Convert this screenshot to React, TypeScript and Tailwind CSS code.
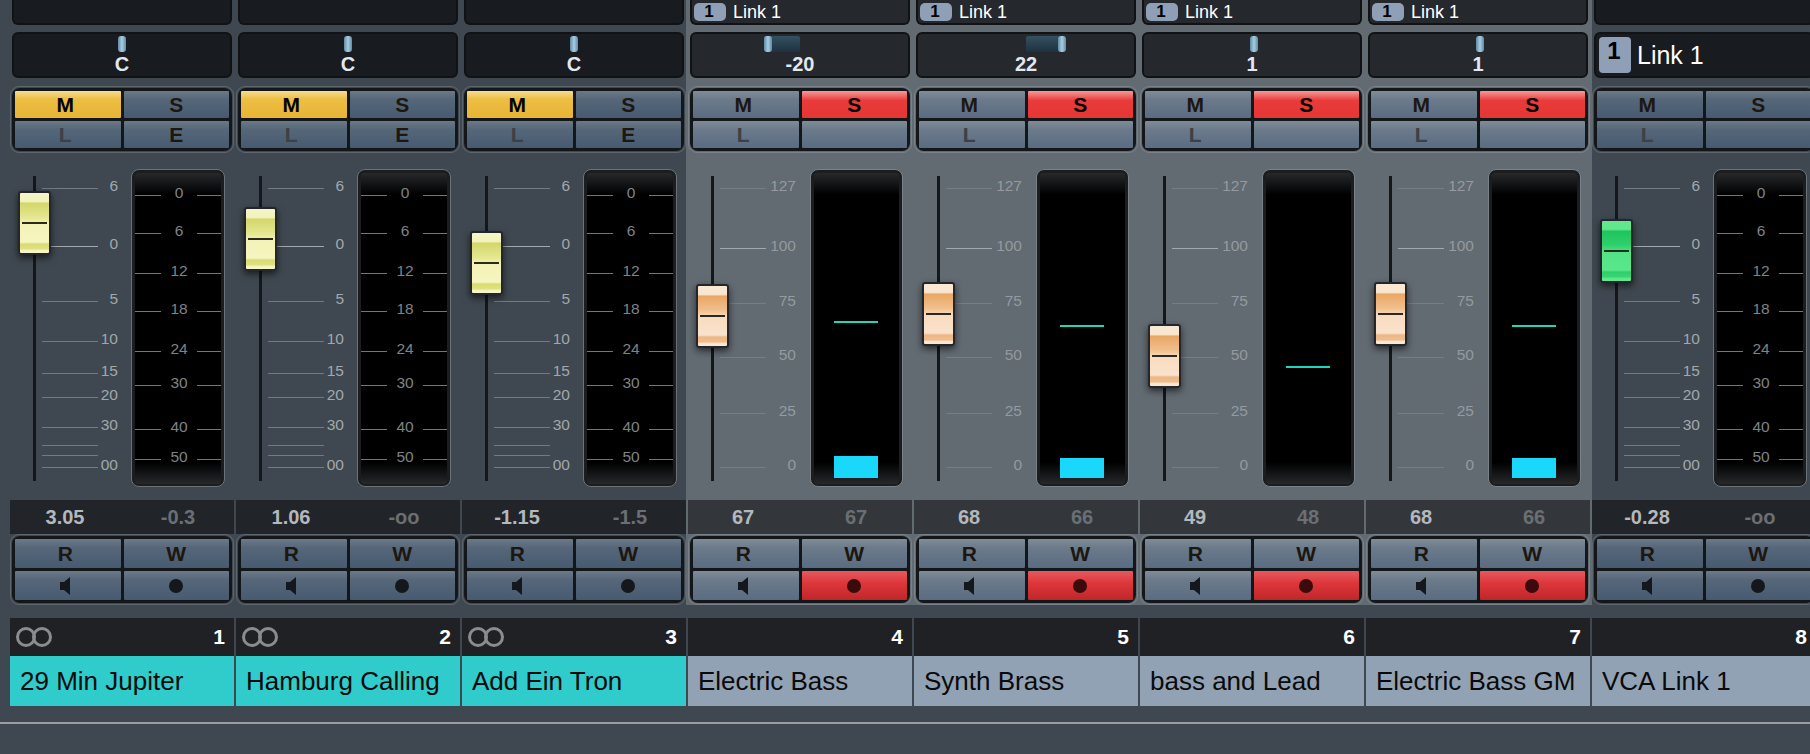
import React from "react";

type Tick = { y: number; label?: string };

interface ChannelData {
  top?: boolean;
  bigLink?: boolean;
  pan: string;
  panFrom: number;
  panTo: number;
  thumb: number;
  midi: boolean;
  capTop: number;
  cap: "yellow" | "orange" | "green";
  level?: number;
  barTop?: number;
  left: string;
  right: string;
  num: number;
  name: string;
  stereo?: boolean;
}

const channels: ChannelData[] = [
  { pan: "C", panFrom: 0, panTo: 0, thumb: 112, midi: false, capTop: 191, cap: "yellow", left: "3.05", right: "-0.3", num: 1, name: "29 Min Jupiter", stereo: true },
  { pan: "C", panFrom: 0, panTo: 0, thumb: 112, midi: false, capTop: 207, cap: "yellow", left: "1.06", right: "-oo", num: 2, name: "Hamburg Calling", stereo: true },
  { pan: "C", panFrom: 0, panTo: 0, thumb: 112, midi: false, capTop: 231, cap: "yellow", left: "-1.15", right: "-1.5", num: 3, name: "Add Ein Tron", stereo: true },
  { top: true, pan: "-20", panFrom: 76, panTo: 112, thumb: 80, midi: true, capTop: 284, cap: "orange", level: 321, barTop: 458, left: "67", right: "67", num: 4, name: "Electric Bass" },
  { top: true, pan: "22", panFrom: 112, panTo: 148, thumb: 148, midi: true, capTop: 282, cap: "orange", level: 325, barTop: 460, left: "68", right: "66", num: 5, name: "Synth Brass" },
  { top: true, pan: "1", panFrom: 0, panTo: 0, thumb: 114, midi: true, capTop: 324, cap: "orange", level: 366, left: "49", right: "48", num: 6, name: "bass and Lead" },
  { top: true, pan: "1", panFrom: 0, panTo: 0, thumb: 114, midi: true, capTop: 282, cap: "orange", level: 325, barTop: 460, left: "68", right: "66", num: 7, name: "Electric Bass GM" },
  { bigLink: true, pan: "", panFrom: 0, panTo: 0, thumb: 0, midi: false, capTop: 219, cap: "green", left: "-0.28", right: "-oo", num: 8, name: "VCA Link 1" },
];

const dbTicks: Tick[] = [
  { y: 188, label: "6" },
  { y: 246, label: "0" },
  { y: 301, label: "5" },
  { y: 341, label: "10" },
  { y: 373, label: "15" },
  { y: 397, label: "20" },
  { y: 427, label: "30" },
  { y: 445 },
  { y: 455 },
  { y: 467, label: "00" },
];

const midiTicks: Tick[] = [
  { y: 188, label: "127" },
  { y: 248, label: "100" },
  { y: 303, label: "75" },
  { y: 357, label: "50" },
  { y: 413, label: "25" },
  { y: 467, label: "0" },
];

const meterTicks: Tick[] = [
  { y: 195, label: "0" },
  { y: 233, label: "6" },
  { y: 273, label: "12" },
  { y: 311, label: "18" },
  { y: 351, label: "24" },
  { y: 385, label: "30" },
  { y: 429, label: "40" },
  { y: 459, label: "50" },
];

const capStyles = {
  yellow:
    "bg-[linear-gradient(180deg,#f5f5c8_0%,#f2f2bc_14%,#d3d76c_17%,#e4e68e_40%,#f3f3b8_52%,#f5f5c0_82%,#d9dc72_85%,#dfe27e_93%,#f5f5c8_96%)]",
  orange:
    "bg-[linear-gradient(180deg,#fbe8d2_0%,#f9e6d0_14%,#e9a765_17%,#f0bf8c_40%,#f8dcc0_52%,#f9e2cc_82%,#eeb684_85%,#f0bc8c_93%,#fbe8d4_96%)]",
  green:
    "bg-[linear-gradient(180deg,#63e88f_0%,#60e68c_14%,#1fc45e_17%,#2ed06c_40%,#52e385_52%,#5ae78c_82%,#2fcf6b_85%,#38d574_93%,#63e88f_96%)]",
};

const btnBase = "flex items-center justify-center font-['Liberation_Sans',sans-serif] font-bold text-[21px] text-[#1c1710] rounded-[1px]";
const btnDark = "bg-[linear-gradient(180deg,#6c7a88_0%,#566779_30%,#475a70_100%)]";
const btnLight = "bg-[linear-gradient(180deg,#808c98_0%,#6c7b8b_30%,#5a6c82_100%)]";
const btnYellow = "bg-[linear-gradient(180deg,#f6dd92_0%,#ecbe42_30%,#e8b535_100%)] text-black";
const btnRed = "bg-[linear-gradient(180deg,#f49a9a_0%,#ea3b3b_35%,#e53535_100%)] text-black";
const btnRec = "bg-[linear-gradient(180deg,#e65a5e_0%,#de383c_40%,#bf2628_100%)]";

function Speaker() {
  return (
    <svg width="10" height="18" viewBox="0 0 10 18">
      <path d="M0 5h4L10 0v18L4 13H0z" fill="#14171b" />
    </svg>
  );
}

function Rings() {
  return (
    <svg width="36" height="20" viewBox="0 0 36 20" fill="none" stroke="#8a8c8e" strokeWidth="3">
      <circle cx="10" cy="10" r="8.5" />
      <circle cx="26" cy="10" r="8.5" />
    </svg>
  );
}

function Badge() {
  return (
    <span className="flex h-[18px] w-[32px] items-center justify-center rounded-[5px] bg-[#8f9fb5] pr-[2px] font-['Liberation_Sans',sans-serif] text-[17px] font-bold text-black">
      1
    </span>
  );
}

function Channel({ data }: { data: ChannelData }) {
  const hi = data.midi;
  const boxBg = hi ? "bg-[#25292e]" : "bg-[#181b1f]";
  const btn = hi ? btnLight : btnDark;
  const ticks = hi ? midiTicks : dbTicks;
  const ring = hi ? "border-[#7a8289]" : "border-[#5f676e]";

  return (
    <div className="w-[226px] shrink-0">
      <div className={hi ? "bg-[#626a72] pl-[2px]" : data.bigLink ? "border-l-2 border-[#626a72]" : "bg-[#3f4850] pl-[2px]"}>
        <div className={`ml-[2px] flex h-[25px] w-[220px] items-center gap-[7px] rounded-b-[6px] border-2 border-t-0 border-[#101214] pl-[2px] ${boxBg}`}>
          {data.top && (
            <>
              <Badge />
              <span className="font-['Liberation_Sans',sans-serif] text-[18px] leading-none text-white">Link 1</span>
            </>
          )}
        </div>

        <div className={`relative mt-[7px] ml-[2px] h-[46px] w-[220px] rounded-[6px] border-2 border-[#101214] ${boxBg}`}>
          {data.bigLink ? (
            <div className="flex h-full items-center gap-[6px] pl-[3px]">
              <span className="flex h-[36px] w-[32px] items-start justify-center rounded-[4px] bg-[#8f9fb5] pt-[2px] pr-[2px] font-['Liberation_Sans',sans-serif] text-[24px] leading-none font-bold text-black">
                1
              </span>
              <span className="font-['Liberation_Sans',sans-serif] text-[25px] leading-none text-white">Link 1</span>
            </div>
          ) : (
            <>
              {data.panTo > 0 && (
                <div
                  className="absolute top-[2px] h-[16px] rounded-[2px] bg-[linear-gradient(180deg,#34505f,#1e3240)]"
                  style={{ left: data.panFrom - 4, width: data.panTo - data.panFrom }}
                />
              )}
              <div
                className="absolute top-[2px] h-[16px] w-[8px] rounded-[3px] bg-[linear-gradient(90deg,#5f8ba5,#a9cde0,#5f8ba5)]"
                style={{ left: data.thumb - 8 }}
              />
              <div className="absolute inset-x-0 top-[19px] text-center font-['Liberation_Sans',sans-serif] text-[20px] leading-[22px] font-bold text-[#e2e8ef]">
                {data.pan}
              </div>
            </>
          )}
        </div>

        <div className={`mt-[8px] h-[67px] w-[224px] rounded-[9px] border p-px ${ring}`}>
          <div className="grid h-full grid-cols-2 grid-rows-2 gap-[3px] rounded-[8px] bg-[#14171a] p-[3px]">
            <div className={`${btnBase} pr-[5px] ${hi || data.bigLink ? btn : btnYellow}`}>M</div>
            <div className={`${btnBase} ${hi ? btnRed : btn}`}>S</div>
            <div className={`${btnBase} pr-[5px] ${btn} text-[#3d4044]`}>L</div>
            <div className={`${btnBase} ${btn}`}>{!hi && !data.bigLink && "E"}</div>
          </div>
        </div>

        <div className="mt-[16px] flex h-[318px] font-['Liberation_Sans',sans-serif]">
          <div className="relative w-[121px] shrink-0">
            <div className="absolute top-[7px] left-[23px] h-[305px] w-[3px] bg-[#15181b]" />
            {ticks.map((t) => (
              <div key={t.y} className="absolute left-[32px] flex h-0 w-[76px] items-center" style={{ top: t.y - 169 }}>
                <div
                  className={`h-[1px] ${hi ? "w-[46px]" : "w-[56px]"} ${
                    t.label === "0" && !hi ? "bg-[#a3a8ac]" : t.label === "100" ? "bg-[#a3a8ac]" : hi ? "bg-[#767d84]" : "bg-[#737b82]"
                  }`}
                />
                {t.label && (
                  <span className={`absolute right-0 -translate-y-[2px] text-[15.5px] leading-none ${hi ? "text-[#949a9f]" : "text-[#a2a7ab]"}`}>
                    {t.label}
                  </span>
                )}
              </div>
            ))}
            <div
              className={`absolute left-[8px] flex h-[64px] w-[33px] items-center rounded-[3px] border-2 border-[#23262a] shadow-[0_3px_7px_rgba(0,0,0,0.6)] ${capStyles[data.cap]}`}
              style={{ top: data.capTop - 169 }}
            >
              <div className="mx-[2px] h-[2px] flex-1 bg-[#2a2820]" />
            </div>
          </div>

          <div className={`h-full rounded-[8px] border bg-[#1b1d1f] p-[3px] pb-[2px] ${hi ? "ml-px w-[93px] border-[#7a8289]" : "w-[94px] border-[#6b7379]"}`}>
            <div className="relative h-full overflow-hidden rounded-[3px] bg-[linear-gradient(180deg,#26282a_0%,#000_7%,#000_93%,#26282a_100%)]">
              {!hi &&
                meterTicks.map((t) => (
                  <div key={t.y} className="absolute inset-x-0 flex h-0 items-center justify-between" style={{ top: t.y - 173 }}>
                    <div className="h-[1px] w-[26px] bg-[#73777b]" />
                    <span className="-translate-y-[2px] text-[15.5px] leading-none text-[#7f8387]">{t.label}</span>
                    <div className="h-[1px] w-[24px] bg-[#73777b]" />
                  </div>
                ))}
              {data.level !== undefined && (
                <div className="absolute left-[20px] h-[2px] w-[44px] bg-[#20d6b8]" style={{ top: data.level - 173 }} />
              )}
              {data.barTop !== undefined && (
                <div className="absolute bottom-[6px] left-[20px] w-[44px] bg-[#19d8fb]" style={{ height: 480 - data.barTop }} />
              )}
            </div>
          </div>
        </div>

        <div className={`mt-[13px] grid h-[34px] w-[224px] grid-cols-2 items-center text-center font-['Liberation_Sans',sans-serif] text-[20px] font-bold ${hi ? "bg-[#33373c]" : "bg-[#212429]"}`}>
          <span className="pr-[2px] text-[#b4b8bc]">{data.left}</span>
          <span className="text-[#6a6f73]">{data.right}</span>
        </div>

        <div className={`h-[71px] w-[224px] rounded-[9px] border p-px ${ring}`}>
          <div className="grid h-full grid-cols-2 grid-rows-2 gap-[3px] rounded-[8px] bg-[#14171a] p-[3px]">
            <div className={`${btnBase} pr-[5px] ${btn}`}>R</div>
            <div className={`${btnBase} ${btn}`}>W</div>
            <div className={`${btnBase} pr-[5px] ${btn}`}>
              <Speaker />
            </div>
            <div className={`${btnBase} ${hi ? btnRec : btn}`}>
              <span className={`h-[14px] w-[14px] rounded-full ${hi ? "bg-[#3a0a0c]" : "bg-[#14171b]"}`} />
            </div>
          </div>
        </div>
      </div>

      <div className="pl-[2px]">
        <div className="mt-[13px] flex h-[38px] w-[224px] items-center justify-between bg-[#1f2124] pr-[9px] pl-[6px] font-['Liberation_Sans',sans-serif] text-[21px] font-bold text-white">
          <span className="flex">{data.stereo && <Rings />}</span>
          <span>{data.num}</span>
        </div>
        <div
          className={`flex h-[50px] w-[224px] items-center pl-[10px] font-['Liberation_Sans',sans-serif] text-[26px] whitespace-nowrap text-[#0a0a0a] ${
            data.stereo ? "bg-[#2fcccb]" : "bg-[#92a2b5]"
          }`}
        >
          {data.name}
        </div>
      </div>
    </div>
  );
}

export default function App() {
  return (
    <div className="h-[754px] w-[1810px] overflow-hidden bg-[#3f4850]">
      <div className="flex pl-[8px]">
        {channels.map((c) => (
          <Channel key={c.num} data={c} />
        ))}
      </div>
      <div className="mt-[16px] h-[2px] bg-[#9a9ea2]" />
    </div>
  );
}
